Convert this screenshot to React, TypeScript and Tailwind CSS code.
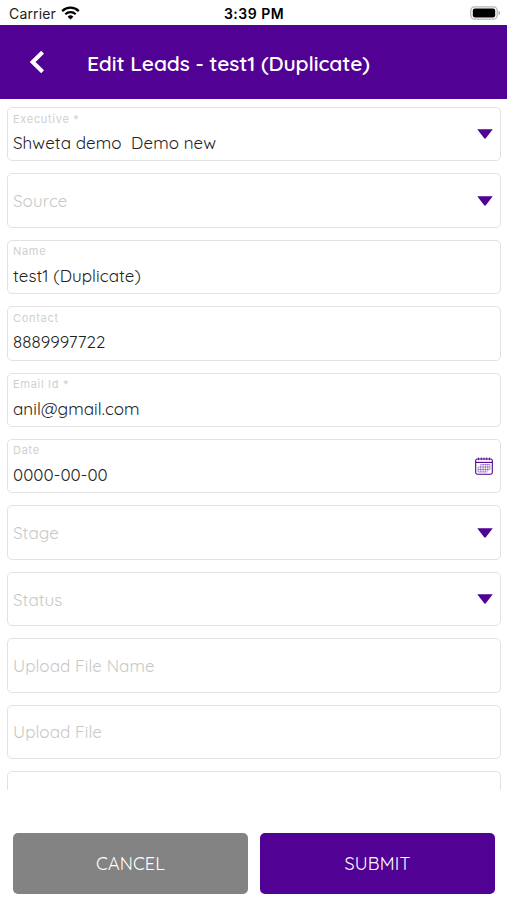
type Field = {
  label: string;
  value?: string;
  icon?: "arrow" | "calendar";
};

const fields: Field[] = [
  { label: "Executive *", value: "Shweta demo  Demo new", icon: "arrow" },
  { label: "Source", icon: "arrow" },
  { label: "Name", value: "test1 (Duplicate)" },
  { label: "Contact", value: "8889997722" },
  { label: "Email Id *", value: "anil@gmail.com" },
  { label: "Date", value: "0000-00-00", icon: "calendar" },
  { label: "Stage", icon: "arrow" },
  { label: "Status", icon: "arrow" },
  { label: "Upload File Name" },
  { label: "Upload File" },
  { label: "" },
];

function StatusBar() {
  return (
    <div className="grid h-[25px] flex-shrink-0 grid-cols-3 items-center pt-[3px] pl-[9px] pr-[6px] font-['Inter',sans-serif] text-black">
      <div className="flex items-center gap-[5px]">
        <span className="text-[14px] leading-none tracking-[0.15px] text-[#222]">Carrier</span>
        <svg className="mb-[2px] h-[14px] w-[19px]" viewBox="0 0 19 14" fill="none" stroke="currentColor">
          <path d="M1.2 5.1a11.8 11.8 0 0 1 16.6 0" strokeWidth={2.3} />
          <path d="M4.3 8.3a7.4 7.4 0 0 1 10.4 0" strokeWidth={2.2} />
          <path d="M9.5 13.6 6.6 10.7a4.1 4.1 0 0 1 5.8 0z" fill="currentColor" stroke="none" />
        </svg>
      </div>
      <span className="pr-[2px] text-center text-[14px] font-semibold leading-none tracking-[0.5px] whitespace-nowrap">
        3:39 PM
      </span>
      <svg className="mb-[2px] h-[14px] w-[31px] justify-self-end" viewBox="0 0 31 14">
        <rect x="0.8" y="0.8" width="26.4" height="12.4" rx="3.8" fill="#fff" stroke="#b5b5b5" strokeWidth="1.3" />
        <rect x="2.8" y="2.6" width="22.4" height="8.8" rx="2" fill="#000" />
        <path d="M28.6 4.8c2 .8 2 3.6 0 4.4z" fill="#a5a5a5" />
      </svg>
    </div>
  );
}

function Header() {
  return (
    <header className="flex h-[73.5px] flex-shrink-0 items-center bg-[#510294] pl-[29px] text-white">
      <button type="button" aria-label="Back">
        <svg className="h-[24px] w-[16px]" viewBox="0 0 16 24" fill="none" stroke="currentColor" strokeWidth={4}>
          <path d="M13.6 2.3 3.6 12l10 9.7" />
        </svg>
      </button>
      <h1 className="mt-[3px] ml-[42px] text-[21px] font-semibold leading-none tracking-[-0.1px] whitespace-nowrap">
        Edit Leads - test1 (Duplicate)
      </h1>
    </header>
  );
}

function ArrowIcon() {
  return (
    <svg className="h-[10px] w-[16px]" viewBox="0 0 16 10" fill="#510294">
      <path d="M.8.2h14.4q.6.1.2.6L8.8 9.2q-.8.9-1.6 0L.6.8Q.2.3.8.2z" />
    </svg>
  );
}

function CalendarIcon() {
  return (
    <svg className="h-[18px] w-[18px]" viewBox="0 0 18 18" fill="none" stroke="#510294">
      <rect x="0.7" y="2" width="16.6" height="15.2" rx="1.6" strokeWidth="1.1" />
      <path d="M1 5.4h16" strokeWidth="1.1" />
      <path d="M3.5.5v2.6M6.3.5v2.6M9 .5v2.6M11.7.5v2.6M14.5.5v2.6" strokeWidth="0.9" />
      <path
        d="M5.7 7.5h9.2M3.1 10h11.8M3.1 12.5h11.8M3.1 15h9M3.1 10v5M5.7 7.5v7.5M8.1 7.5v7.5M10.4 7.5v7.5M12.7 7.5v7M14.9 7.5v5"
        strokeWidth="0.6"
        opacity="0.7"
      />
    </svg>
  );
}

function FormField({ label, value, icon }: Field) {
  return (
    <div className="flex h-[54.4px] flex-shrink-0 items-center justify-between rounded-[5px] border border-[#e2e2e2] pr-[7px] pl-[5px]">
      {value ? (
        <div className="flex h-full flex-col">
          <span className="mt-[3.5px] font-['Inter',sans-serif] text-[11px] leading-[14px] tracking-[0.7px] text-[#cfcfcf]">
            {label}
          </span>
          <span className="mt-[7.5px] text-[17px] leading-[20px] tracking-[0.06px] whitespace-pre text-[#222]">
            {value}
          </span>
        </div>
      ) : (
        <span className="mt-[1.5px] text-[17px] leading-[20px] tracking-[0.06px] text-[#c8c8c8]">{label}</span>
      )}
      {icon === "arrow" && <ArrowIcon />}
      {icon === "calendar" && <CalendarIcon />}
    </div>
  );
}

export default function App() {
  return (
    <div className="flex h-[900px] w-[507px] flex-col overflow-hidden bg-white font-['Quicksand',sans-serif]">
      <StatusBar />
      <Header />
      <main className="flex h-[691.5px] flex-shrink-0 flex-col gap-[12px] overflow-hidden pt-[8.5px] pr-[6px] pl-[7px]">
        {fields.map((field, i) => (
          <FormField key={i} {...field} />
        ))}
      </main>
      <footer className="mt-[43px] flex gap-[12px] pr-[12px] pl-[13px] text-[18px] text-white">
        <button type="button" className="h-[61px] flex-1 rounded-[5px] bg-[#838383] tracking-[0.15px]">
          CANCEL
        </button>
        <button type="button" className="h-[61px] flex-1 rounded-[5px] bg-[#510294] tracking-[0.15px]">
          SUBMIT
        </button>
      </footer>
    </div>
  );
}
